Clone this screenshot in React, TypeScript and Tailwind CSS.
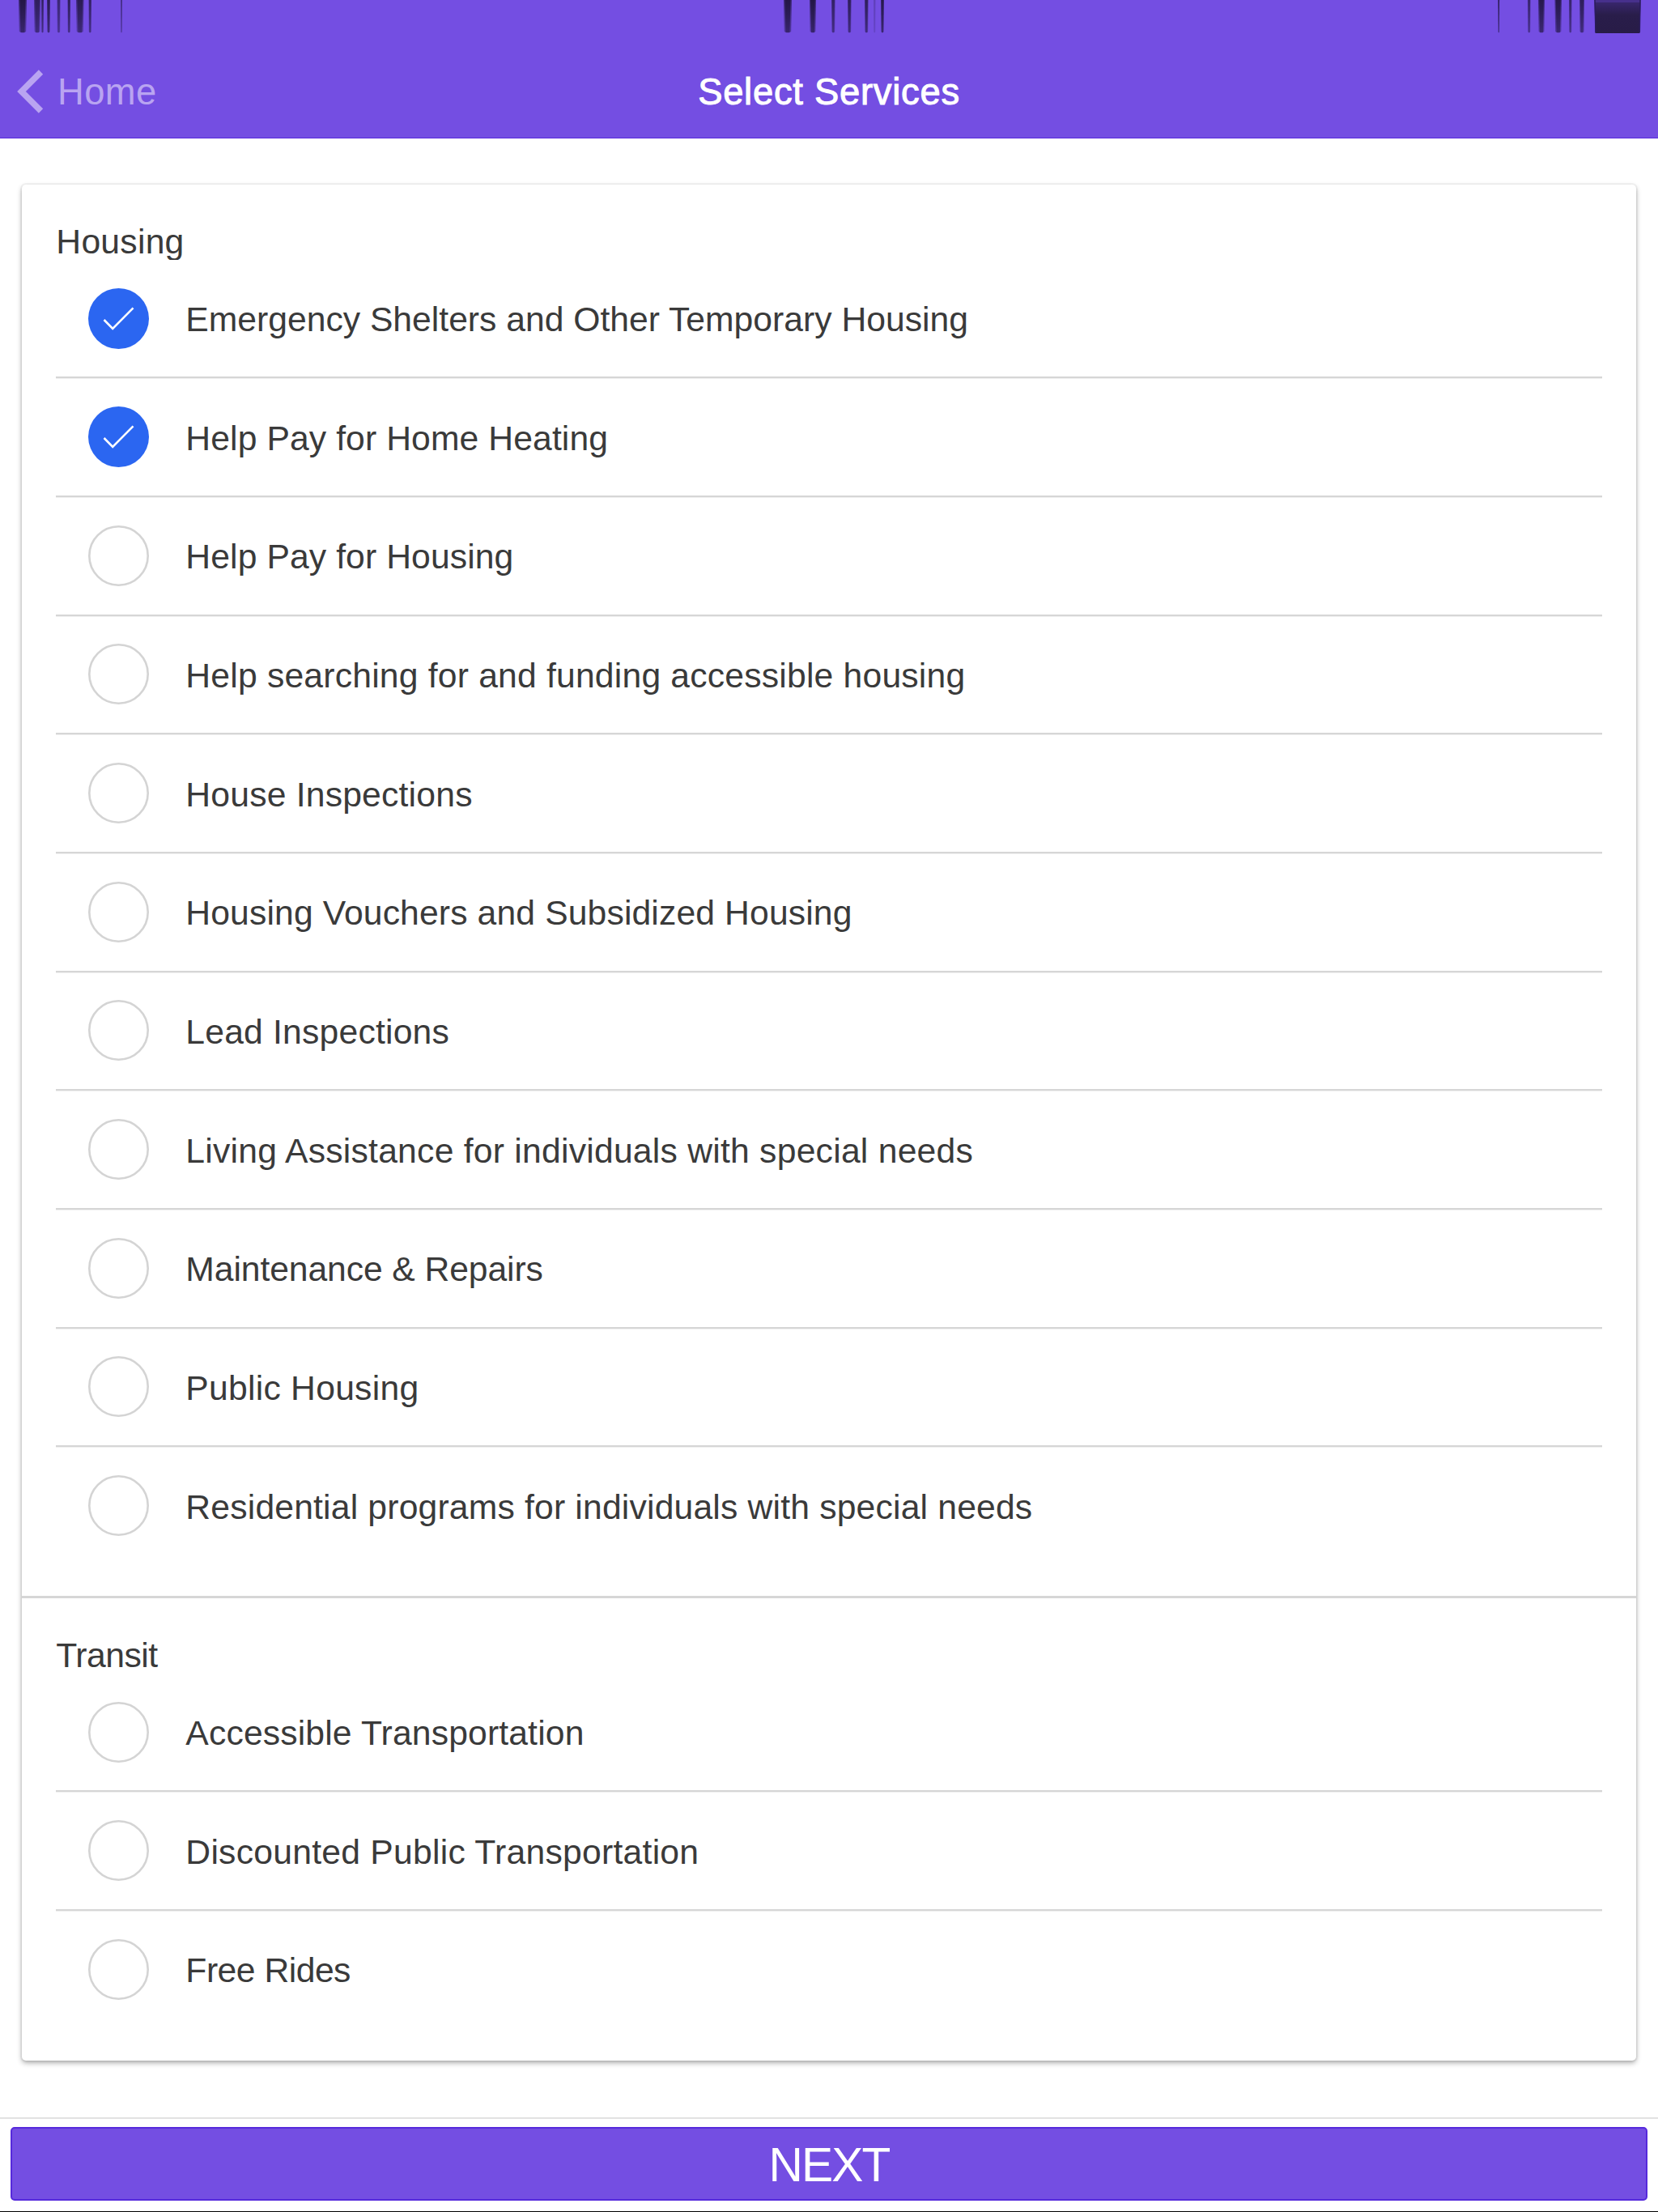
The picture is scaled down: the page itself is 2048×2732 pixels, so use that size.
type Service = { label: string; checked?: boolean; tracking?: string };

const housing: Service[] = [
  { label: 'Emergency Shelters and Other Temporary Housing', checked: true },
  { label: 'Help Pay for Home Heating', checked: true, tracking: 'tracking-[0.1px]' },
  { label: 'Help Pay for Housing', tracking: 'tracking-[0.1px]' },
  { label: 'Help searching for and funding accessible housing', tracking: 'tracking-[0.2px]' },
  { label: 'House Inspections', tracking: 'tracking-[0.2px]' },
  { label: 'Housing Vouchers and Subsidized Housing', tracking: 'tracking-[0.13px]' },
  { label: 'Lead Inspections', tracking: 'tracking-[0.2px]' },
  { label: 'Living Assistance for individuals with special needs', tracking: 'tracking-[0.24px]' },
  { label: 'Maintenance & Repairs', tracking: 'tracking-[-0.09px]' },
  { label: 'Public Housing', tracking: 'tracking-[0.25px]' },
  { label: 'Residential programs for individuals with special needs', tracking: 'tracking-[0.18px]' },
];

const transit: Service[] = [
  { label: 'Accessible Transportation', tracking: 'tracking-[0.15px]' },
  { label: 'Discounted Public Transportation', tracking: 'tracking-[0.25px]' },
  { label: 'Free Rides', tracking: 'tracking-[-0.5px]' },
];

// [x, width, opacity] of each dark streak in the status bar
const streaks: [number, number, number][] = [
  [23, 10, 1], [42, 8, 0.85], [51, 3, 0.8], [58, 4, 0.9], [70.5, 4, 0.7], [83.5, 3.5, 0.85],
  [94, 9.5, 0.9], [109.5, 3.5, 0.8], [149, 2, 0.6],
  [968, 10, 1], [1000, 8, 1], [1027, 4.5, 0.8], [1047, 4.5, 0.85], [1068, 4.5, 0.85], [1079, 2.5, 0.25], [1088, 4, 0.95],
  [1850.5, 1.6, 1], [1887, 3.5, 0.75], [1900, 8, 0.95], [1920.5, 8.5, 0.95], [1938, 3.5, 0.75], [1951, 6, 0.85],
];

function StatusBar() {
  return (
    <svg className="block h-[42px] w-full" viewBox="0 0 2048 42" aria-hidden="true">
      <defs>
        <linearGradient id="streak" gradientUnits="userSpaceOnUse" x1="0" y1="0" x2="0" y2="41">
          <stop offset="0" stopColor="#180f30" />
          <stop offset="1" stopColor="#180f30" stopOpacity="0.62" />
        </linearGradient>
        <linearGradient id="battery" x1="0" y1="0" x2="0" y2="1">
          <stop offset="0" stopColor="#47308c" />
          <stop offset="0.07" stopColor="#47308c" />
          <stop offset="0.08" stopColor="#38266c" />
          <stop offset="0.45" stopColor="#291d4a" />
          <stop offset="1" stopColor="#281c47" />
        </linearGradient>
      </defs>
      {streaks.map(([x, w, o]) => (
        <g key={x} fill="url(#streak)" opacity={o}>
          <path d={`M${x} 0H${x + w}L${x + w - w * 0.08} 39Q${x + w / 2} 42 ${x + w * 0.08} 39Z`} opacity="0.6" />
          <path d={`M${x + w * 0.15} 0H${x + w * 0.85}L${x + w * 0.75} 40H${x + w * 0.25}Z`} opacity="0.7" />
        </g>
      ))}
      <path d="M1969.5 0H2026.5L2025.5 41H1970.5Z" fill="url(#battery)" />
      <path d="M1970 0L1971 40M2026 0L2025.3 40" stroke="#2b1c5c" strokeWidth="1.5" />
    </svg>
  );
}

function CheckMark({ checked }: { checked?: boolean }) {
  return (
    <svg className="h-[75px] w-[75px] shrink-0" viewBox="0 0 75 75" fill="none">
      {checked ? (
        <>
          <circle cx="37.5" cy="37.5" r="37.5" fill="#2b66f1" />
          <path d="M19.5 39L30.2 49.8L55.5 24.3" stroke="#fff" strokeWidth="2.6" />
        </>
      ) : (
        <circle cx="37.5" cy="37.5" r="36.2" stroke="#d4d4d4" strokeWidth="2.6" />
      )}
    </svg>
  );
}

function Section({ title, titleTracking, items }: { title: string; titleTracking: string; items: Service[] }) {
  return (
    <section className="px-[42.33px] pt-[43px] pb-[37.5px]">
      <h2 className={'h-[49.7px] overflow-hidden text-[42.67px] leading-[54px] ' + titleTracking}>{title}</h2>
      <ul>
        {items.map((item, i) => (
          <li
            key={item.label}
            className={
              'flex h-[146.67px] items-center border-b-2 pl-10 ' +
              (i < items.length - 1 ? 'border-[#d6d6d6] shadow-[0_1px_0_#f0f0f0]' : 'border-transparent')
            }
          >
            <CheckMark checked={item.checked} />
            <span
              className={
                'pt-[2px] pl-[45px] text-[42.67px] leading-[56px] whitespace-nowrap ' + (item.tracking ?? 'tracking-normal')
              }
            >
              {item.label}
            </span>
          </li>
        ))}
      </ul>
    </section>
  );
}

export default function App() {
  return (
    <div className="flex h-[2732px] w-[2048px] flex-col bg-white font-['Liberation_Sans',Arial,sans-serif] text-[#3a3a3a]">
      <header className="h-[171px] border-b border-[#5629dc] bg-[#744ee2]">
        <StatusBar />
        <div className="grid h-[128px] grid-cols-3 items-center text-[45.33px]">
          <div className="flex items-center pt-[13px] text-[#b9a4f1]">
            <svg className="ml-[21px] h-[54px] w-[34px]" viewBox="0 0 34 54" fill="none">
              <path d="M29.5 3L5.5 27L29.5 51" stroke="currentColor" strokeWidth="7.5" />
            </svg>
            <span className="pt-[2px] pl-4 leading-[52px] tracking-[0.4px]">Home</span>
          </div>
          <h1 className="pt-[15px] text-center leading-[52px] tracking-[0.75px] text-white [-webkit-text-stroke:1px_#fff]">
            Select Services
          </h1>
        </div>
      </header>
      <main className="flex-1 px-[27px] pt-[57px]">
        <div className="h-[2317px] rounded-[5px] bg-white shadow-[0_3px_6px_rgba(0,0,0,0.32),0_0_0_2px_rgba(0,0,0,0.035)]">
          <Section title="Housing" titleTracking="tracking-[0.25px]" items={housing} />
          <div className="h-[2.67px] bg-[#d6d6d6]" />
          <Section title="Transit" titleTracking="tracking-[-0.5px]" items={transit} />
        </div>
      </main>
      <footer className="h-[117px] border-t-2 border-b border-t-[#e2e2e2] border-b-black bg-white px-[13px] pt-[10px]">
        <button className="flex h-[91px] w-full items-center justify-center rounded-[5px] border-[2.67px] border-[#5629dc] bg-[#744ee2] pt-[3px] text-[58.67px] leading-none tracking-[-1.8px] text-white">
          NEXT
        </button>
      </footer>
    </div>
  );
}
